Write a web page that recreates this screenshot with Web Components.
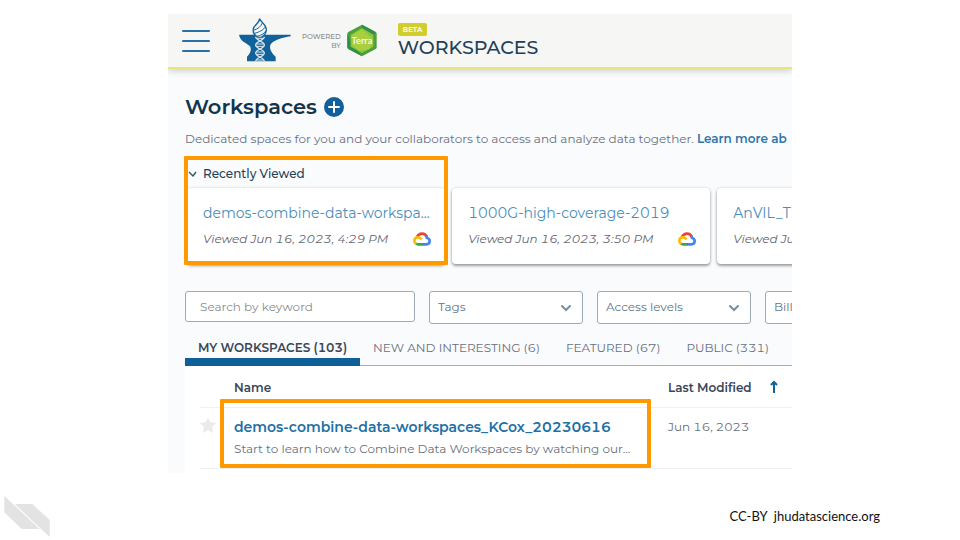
<!DOCTYPE html>
<html lang="en">
<head>
<meta charset="utf-8">
<title>Workspaces</title>
<style>
html, body { margin: 0; background: #fff; }
</style>
</head>
<body>
<slide-page></slide-page>
<script>
const define = (name, html) => {
  const t = document.createElement('template');
  t.innerHTML = '<style>*{box-sizing:border-box}button,input,select{font:inherit;font-variant-numeric:inherit;color:inherit;margin:0}button{background:none;border:0;padding:0;cursor:pointer}a{text-decoration:none}</style>' + html;
  customElements.define(name, class extends HTMLElement {
    constructor() {
      super();
      this.attachShadow({ mode: 'open' }).append(t.content.cloneNode(true));
    }
  });
};

define('cloud-icon', `
<style>:host{display:block;width:18px;height:14px}svg{display:block}</style>
<svg width="18" height="14" viewBox="0 0 54 42" fill="none" stroke-width="8">
  <path d="M12 16C15 8 21 5 27 5c7 0 12 4 14 10" stroke="#ea4335"/>
  <path d="M40 12c2 2 2 4 2 6 5 1 8 5 8 9 0 6-4 10-10 10H27" stroke="#4285f4"/>
  <path d="M29 37H15c-3 0-5-1-7-2" stroke="#34a853"/>
  <path d="M10 36C6 34 4 31 4 27c0-6 4-11 11-11 5 0 8 2 11 6" stroke="#fbbc05"/>
</svg>`);

define('anvil-logo', `
<style>:host{display:block}svg{display:block}</style>
<svg width="52" height="46" viewBox="15 17 156 138" role="img" aria-label="AnVIL">
  <path d="M15 67H170V72C146 76 116 84 109 98C105 110 115 124 125 133V147H39V133C48 125 54 112 48 102C40 92 18 88 15 67Z" fill="#11629a"/>
  <path d="M77 19C80 30 97 36 97 52C97 62 90 70 82 75H71C62 70 56 62 58 50C59 38 76 34 77 19Z" fill="#f6f6f4" stroke="#11629a" stroke-width="4"/>
  <path d="M60 53C72 50 81 42 84 33M61 63C75 60 90 52 94 43M68 72C80 70 91 64 96 55" fill="none" stroke="#11629a" stroke-width="3"/>
  <g fill="none" stroke="#dbe7ee" stroke-width="4">
    <path d="M65 73C65 84 91 87 91 98S65 111 65 122S91 135 91 147"/>
    <path d="M91 73C91 84 65 87 65 98S91 111 91 122S65 135 65 147"/>
    <path d="M68 78H88M67 95H89M67 102H89M67 119H89M67 126H89M68 143H88" stroke-width="3"/>
  </g>
</svg>`);

define('app-header', `
<style>
:host{display:flex;align-items:center;height:55px;padding-left:14px;background:#f6f6f4;border-bottom:2px solid #e9e57e;box-shadow:0 2px 7px #0000002e;position:relative}
.menu{width:28px;height:22px;display:flex;flex-direction:column;justify-content:space-between;margin-right:29px}
.menu i{height:2px;background:#2a70a3;border-radius:1px}
.by{font-size:7px;line-height:9px;font-weight:500;color:#8b8d90;text-align:right;margin:0 6px 0 11px}
.terra{display:block}
.brand{margin-left:21px;display:flex;flex-direction:column;align-items:flex-start;padding-top:2px}
.beta{background:#d1cd2c;color:#fbfae6;font-size:7px;font-weight:700;line-height:13px;padding:0 5px;border-radius:2px}
.name{font-size:19px;line-height:24px;font-weight:500;color:#1f4158}
</style>
<button class="menu" aria-label="Menu"><i></i><i></i><i></i></button>
<anvil-logo></anvil-logo>
<div class="by">POWERED<br>BY</div>
<svg class="terra" width="30" height="33" viewBox="0 0 90 99">
  <path d="M45 2L86 24Q89 26 89 29V70Q89 73 86 75L45 97L4 75Q1 73 1 70V29Q1 26 4 24Z" fill="#4c9f3d"/>
  <path d="M45 2L86 24L70 38L45 14Z M1 70V29L14 60L45 97L4 75Z" fill="#2f8f45"/>
  <path d="M45 12L79 32V68L45 87L11 68V32Z" fill="#8dc63f"/>
  <path d="M17 33L45 16L78 46L68 75L37 80L14 62Z" fill="#a9cf3f"/>
  <text x="45" y="59" text-anchor="middle" font-family="Lato, sans-serif" font-weight="500" font-size="28" fill="#fff">Terra</text>
</svg>
<div class="brand"><span class="beta">BETA</span><span class="name">WORKSPACES</span></div>`);

define('page-title', `
<style>
:host{display:block}
.row{display:flex;align-items:center;gap:7px;height:28px}
h1{margin:0;font-size:21px;line-height:28px;font-weight:600;color:#12354b}
button,svg{display:block}
p{margin:9px 0 0;font-size:12px;line-height:18px;white-space:nowrap;color:#69707d}
a{color:#2c76a8;font-weight:600}
</style>
<div class="row"><h1>Workspaces</h1>
<button aria-label="Create workspace"><svg width="20" height="20" viewBox="0 0 20 20"><circle cx="10" cy="10" r="10" fill="#11609b"/><path d="M10 5V15M5 10H15" stroke="#fff" stroke-width="2" stroke-linecap="round"/></svg></button></div>
<p>Dedicated spaces for you and your collaborators to access and analyze data together. <a href="#">Learn more ab</a></p>`);

define('recent-card', `
<style>
:host{display:block;flex:0 0 calc(43% - 2px);height:76px;padding:15px 14px 0 16px;background:#fff;border-radius:4px;box-shadow:0 2px 3px #00000059,0 0 3px #00000026;white-space:nowrap}
a{display:block;font-size:14px;line-height:20px;color:#4a8db8}
.line{display:flex;justify-content:space-between;align-items:center;margin-top:7px;font-size:12px;line-height:18px;font-style:italic;color:#5f6673}
cloud-icon{flex:none}
</style>
<a href="#"><slot name="title"></slot></a>
<div class="line"><span><slot></slot></span><cloud-icon></cloud-icon></div>`);

define('recent-list', `
<style>
:host{display:block;position:relative;padding-top:9px;margin-top:8px}
button{display:flex;align-items:center;gap:6px;margin-left:3px;font-size:12px;font-weight:500;line-height:18px;color:#1f4158}
.cards{display:flex;gap:7px;margin:5px 0 0 2px}
.mark{position:absolute;left:-1px;top:0;bottom:-1px;width:calc(43% + 3px);border:4px solid #f90;border-radius:1px;pointer-events:none}
</style>
<button aria-expanded="true"><svg width="9" height="6" viewBox="0 0 9 6"><path d="M1 1L5 5L8 1" fill="none" stroke="#35536a" stroke-width="1.4"/></svg>Recently Viewed</button>
<div class="cards">
<recent-card><span slot="title">demos-combine-data-workspa...</span>Viewed Jun 16, 2023, 4:29 PM</recent-card>
<recent-card><span slot="title">1000G-high-coverage-2019</span>Viewed Jun 16, 2023, 3:50 PM</recent-card>
<recent-card><span slot="title">AnVIL_T2</span>Viewed Ju</recent-card>
</div><div class="mark"></div>`);

define('filter-bar', `
<style>
:host{display:flex;gap:14px;margin-top:27px;font-size:12px;color:#5f7687}
input{flex:0 0 230px;height:31px;padding:0 14px;border:1px solid #9cabb7;border-radius:3px;background:#fff}
input::placeholder{color:#8a8d90;opacity:1}
label{flex:0 0 154px;position:relative;display:block}
select{appearance:none;width:100%;height:33px;padding:0 8px 2px;border:1px solid #9cabb7;border-radius:3px;background:#fff}
svg{position:absolute;right:11px;top:13px;pointer-events:none}
</style>
<input type="text" placeholder="Search by keyword" aria-label="Search by keyword">
<label><select aria-label="Tags"><option>Tags</option></select><svg width="12" height="8" viewBox="0 0 12 8"><path d="M2 2L6 6L10 2" fill="none" stroke="#7790a0" stroke-width="2" stroke-linecap="round"/></svg></label>
<label><select aria-label="Access levels"><option>Access levels</option></select><svg width="12" height="8" viewBox="0 0 12 8"><path d="M2 2L6 6L10 2" fill="none" stroke="#7790a0" stroke-width="2" stroke-linecap="round"/></svg></label>
<label><select aria-label="Billing"><option>Bill</option></select></label>`);

define('tab-strip', `
<style>
:host{display:flex;height:42px;border-bottom:1px solid #8db5cf;white-space:nowrap;font-size:12px;color:#69707d}
button{flex:none;height:42px;padding:13px 13px 0;border-bottom:8px solid transparent}
button[aria-selected=true]{border-color:#0f5f98;font-weight:600;color:#3a4657}
</style>
<button role="tab" aria-selected="true">MY WORKSPACES (103)</button><button role="tab">NEW AND INTERESTING (6)</button><button role="tab">FEATURED (67)</button><button role="tab">PUBLIC (331)</button>`);

define('workspace-table', `
<style>
:host{display:block;background:#fff;padding:0 0 4px 15px}
table{width:100%;table-layout:fixed;border-collapse:separate;border-spacing:0}
.s{width:34px}.d{width:124px}
th{height:42px;padding:1px 0 0;border-bottom:1px solid #f0f1f3;text-align:left;font-size:12px;font-weight:600;color:#3a4657}
td{height:61px;padding:9px 0 0;vertical-align:top;border-bottom:1px solid #f0f1f3;position:relative;white-space:nowrap;font-size:12px;line-height:20px;color:#69707d}
td a{display:block;font-size:14px;line-height:20px;font-weight:600;color:#2170a5}
p{margin:3px 0 0;font-size:12px;line-height:18px}
svg{display:block}
.sort{display:flex;align-items:center;gap:18px;font-weight:600}
.mark{position:absolute;left:-14px;top:-9px;bottom:0;right:17px;border:4px solid #f90;border-radius:1px;pointer-events:none}
</style>
<table>
<thead><tr><th class="s"></th><th>Name</th><th class="d"><button class="sort">Last Modified<svg width="8" height="14" viewBox="0 0 8 14"><path d="M4 13V2M1 5L4 2L7 5" fill="none" stroke="#11629a" stroke-width="2"/></svg></button></th></tr></thead>
<tbody><tr>
<td><button aria-label="Favorite"><svg width="16" height="16" viewBox="0 0 16 16"><path d="M8 0L10 5L16 6L12 10L13 16L8 13L3 16L4 10L0 6L6 5Z" fill="#e9ece6"/></svg></button></td>
<td><a href="#">demos-combine-data-workspaces_KCox_20230616</a><p>Start to learn how to Combine Data Workspaces by watching our...</p><div class="mark"></div></td>
<td>Jun 16, 2023</td>
</tr></tbody></table>`);

define('app-window', `
<style>
:host{display:block;margin:14px 17.5% 0;background:#fafbfd;overflow:hidden;font-family:Montserrat,Inter,sans-serif;font-variant-numeric:tabular-nums}
main{padding:24px 0 0 17px}
</style>
<app-header></app-header>
<main><page-title></page-title><recent-list></recent-list><filter-bar></filter-bar><tab-strip></tab-strip><workspace-table></workspace-table></main>`);

define('slide-footer', `
<style>
:host{display:flex;justify-content:space-between;padding:0 80px 2px 4px;font:13px/20px Lato,sans-serif;color:#111}
svg{display:block}
span{margin-top:10px;white-space:pre}
</style>
<svg width="46" height="42" viewBox="0 0 138 126" fill="#e3e3e3"><path d="M1 0L107 99H53L1 49Z"/><path d="M32 24H85L137 72V123Z"/></svg>
<span>CC-BY  jhudatascience.org</span>`);

define('slide-page', `
<style>:host{display:flex;flex-direction:column;justify-content:space-between;min-height:100vh}</style>
<app-window></app-window><slide-footer></slide-footer>`);
</script>
</body>
</html>
